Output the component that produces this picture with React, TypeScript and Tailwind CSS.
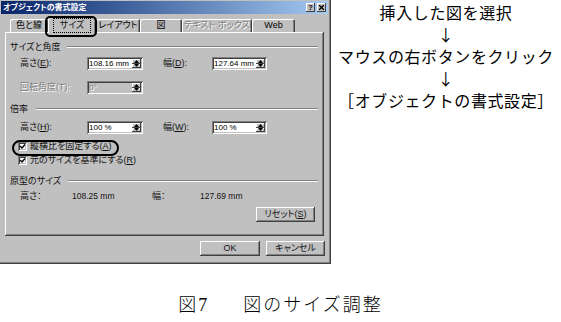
import React from "react";

const raised =
  "shadow-[inset_-1px_-1px_0_#404040,inset_1px_1px_0_#ffffff,inset_-2px_-2px_0_#808080]";
const raisedSm = "shadow-[inset_-1px_-1px_0_#404040,inset_1px_1px_0_#ffffff]";
const sunken =
  "shadow-[inset_1px_1px_0_#808080,inset_-1px_-1px_0_#ffffff,inset_2px_2px_0_#404040,inset_-2px_-2px_0_#c0c0c0]";

function U({ children }: { children: React.ReactNode }) {
  return <span className="underline underline-offset-[1px]">{children}</span>;
}

function Spin() {
  return (
    <div className="flex flex-col w-[9px] h-full shrink-0">
      <div className={`flex-1 bg-[#c0c0c0] ${raisedSm} flex items-center justify-center`}>
        <svg width="5" height="3" viewBox="0 0 5 3">
          <path d="M2.5 0 L5 3 L0 3 Z" fill="#000" />
        </svg>
      </div>
      <div className={`flex-1 bg-[#c0c0c0] ${raisedSm} flex items-center justify-center`}>
        <svg width="5" height="3" viewBox="0 0 5 3">
          <path d="M0 0 L5 0 L2.5 3 Z" fill="#000" />
        </svg>
      </div>
    </div>
  );
}

function Field({
  value,
  width,
  disabled,
}: {
  value: string;
  width: string;
  disabled?: boolean;
}) {
  return (
    <div
      className={`flex h-[13px] ${width} ${sunken} ${
        disabled ? "bg-[#c0c0c0]" : "bg-white"
      } p-[2px] shrink-0`}
    >
      <div
        className={`flex-1 min-w-0 flex items-center text-[8px] leading-none whitespace-nowrap ${
          disabled ? "text-[#808080] [text-shadow:1px_1px_0_#ffffff]" : "text-black"
        }`}
      >
        {value}
      </div>
      <Spin />
    </div>
  );
}

function Header({ label, lineLeft }: { label: string; lineLeft: string }) {
  return (
    <div className="flex items-center h-[10px] pl-[5px] pr-[6px]">
      <span className="leading-none whitespace-nowrap">{label}</span>
      <div className={`flex-1 ${lineLeft} h-[2px] border-t border-t-[#808080] border-b border-b-white`} />
    </div>
  );
}

function Check() {
  return (
    <div className={`w-[9px] h-[9px] shrink-0 bg-white ${sunken} flex items-center justify-center`}>
      <svg width="7" height="7" viewBox="0 0 7 7">
        <path d="M1 3 L3 5 L6 1.5" stroke="#000" strokeWidth="1.4" fill="none" />
      </svg>
    </div>
  );
}

function Tab({ w, children, dim }: { w: string; children: React.ReactNode; dim?: boolean }) {
  return (
    <div
      className={`${w} h-[13px] bg-[#c0c0c0] rounded-t-[2px] shadow-[inset_1px_1px_0_#ffffff,inset_-1px_0_0_#404040,inset_-2px_0_0_#808080] flex items-center justify-center leading-none whitespace-nowrap mb-px ${
        dim ? "text-[#808080] [text-shadow:1px_1px_0_#ffffff]" : "text-black"
      }`}
    >
      {children}
    </div>
  );
}

function Btn({ w, children }: { w: string; children: React.ReactNode }) {
  return (
    <div
      className={`${w} h-[15px] bg-[#c0c0c0] ${raised} flex items-center justify-center leading-none whitespace-nowrap`}
    >
      {children}
    </div>
  );
}

export default function App() {
  return (
    <div className="w-[561px] h-[322px] bg-white relative overflow-hidden font-['Liberation_Sans','Noto_Sans_CJK_JP',sans-serif]">
      <div className="flex">
        {/* Dialog */}
        <div className="bg-[#404040] pr-px pb-px">
          <div className="bg-[#808080] pr-px pb-px">
            <div className="relative w-[329px] h-[262px] bg-[#c0c0c0] flex flex-col text-[9px] text-[#111] [font-feature-settings:'palt']">
              {/* title bar */}
              <div className="mt-px h-[13px] mx-px bg-gradient-to-r from-[#0a246a] to-[#a6caf0] flex items-center pl-[2px] pr-[2px]">
                <span className="text-white font-bold text-[8px] leading-none whitespace-nowrap">
                  オブジェクトの書式設定
                </span>
                <div className="flex-1" />
                <div
                  className={`w-[9px] h-[9px] bg-[#c0c0c0] ${raisedSm} flex items-center justify-center text-[8px] font-bold leading-none text-black`}
                >
                  ?
                </div>
                <div className={`ml-[2px] w-[9px] h-[9px] bg-[#c0c0c0] ${raisedSm} flex items-center justify-center`}>
                  <svg width="5" height="5" viewBox="0 0 5 5">
                    <path d="M0 0 L5 5 M5 0 L0 5" stroke="#000" strokeWidth="1.3" />
                  </svg>
                </div>
              </div>

              {/* tabs */}
              <div className="relative z-10 flex items-end h-[16px] pl-[10px] mt-[3px] -mb-px">
                <Tab w="w-[38px]">色と線</Tab>
                <div className="relative w-[48px] h-[16px] bg-[#c0c0c0] rounded-t-[2px] shadow-[inset_1px_1px_0_#ffffff,inset_-1px_0_0_#404040,inset_-2px_0_0_#808080] flex items-center justify-center leading-none whitespace-nowrap">
                  <span className="px-[6px] py-[2px] outline outline-1 outline-dotted outline-black">
                    サイズ
                  </span>
                </div>
                <Tab w="w-[44px]">レイアウト</Tab>
                <Tab w="w-[42px]">図</Tab>
                <Tab w="w-[70px]" dim>
                  テキスト ボックス
                </Tab>
                <Tab w="w-[43px]">Web</Tab>
              </div>

              {/* panel */}
              <div className={`ml-[5px] w-[319px] h-[204px] ${raised} flex flex-col pt-[10px]`}>
                <Header label="サイズと角度" lineLeft="ml-[7px]" />

                <div className="flex items-center h-[13px] mt-[5px] pl-[15px]">
                  <span className="w-[67px] leading-none whitespace-nowrap">
                    高さ(<U>E</U>):
                  </span>
                  <Field value="108.16 mm" width="w-[56px]" />
                  <span className="ml-[20px] w-[49px] leading-none whitespace-nowrap">
                    幅(<U>D</U>):
                  </span>
                  <Field value="127.64 mm" width="w-[55px]" />
                </div>

                <div className="flex items-center h-[13px] mt-[11px] pl-[15px]">
                  <span className="w-[67px] leading-none whitespace-nowrap text-[#808080] [text-shadow:1px_1px_0_#ffffff]">
                    回転角度(T):
                  </span>
                  <Field value="0°" width="w-[56px]" disabled />
                </div>

                <div className="mt-[10px]">
                  <Header label="倍率" lineLeft="ml-[8px]" />
                </div>

                <div className="flex items-center h-[13px] mt-[7px] pl-[15px]">
                  <span className="w-[67px] leading-none whitespace-nowrap">
                    高さ(<U>H</U>):
                  </span>
                  <Field value="100 %" width="w-[56px]" />
                  <span className="ml-[20px] w-[49px] leading-none whitespace-nowrap">
                    幅(<U>W</U>):
                  </span>
                  <Field value="100 %" width="w-[55px]" />
                </div>

                <div className="flex items-center h-[10px] mt-[7px] pl-[13px]">
                  <Check />
                  <span className="ml-[3px] leading-none whitespace-nowrap">
                    縦横比を固定する(<U>A</U>)
                  </span>
                </div>
                <div className="flex items-center h-[10px] mt-[4px] pl-[13px]">
                  <Check />
                  <span className="ml-[3px] leading-none whitespace-nowrap">
                    元のサイズを基準にする(<U>R</U>)
                  </span>
                </div>

                <div className="mt-[11px]">
                  <Header label="原型のサイズ" lineLeft="ml-[7px]" />
                </div>

                <div className="flex items-center h-[10px] mt-[5px] pl-[15px] whitespace-nowrap">
                  <span className="w-[52px] leading-none">高さ：</span>
                  <span className="w-[80px] leading-none text-[8.5px]">108.25 mm</span>
                  <span className="w-[48px] leading-none">幅：</span>
                  <span className="leading-none text-[8.5px]">127.69 mm</span>
                </div>

                <div className="flex justify-end pr-[9px] mt-[6px]">
                  <Btn w="w-[59px]">
                    リセット(<U>S</U>)
                  </Btn>
                </div>
              </div>

              {/* buttons */}
              <div className="flex justify-end gap-[6px] pr-[4px] mt-[5px]">
                <Btn w="w-[60px]">OK</Btn>
                <Btn w="w-[59px]">キャンセル</Btn>
              </div>

              {/* annotations */}
              <div className="absolute left-[45px] top-[16px] w-[52px] h-[21px] border-2 border-black rounded-[5px] z-20" />
              <div className="absolute left-[12px] top-[140px] w-[107px] h-[16px] border-2 border-black rounded-[8px] z-20" />
            </div>
          </div>
        </div>

        {/* right text */}
        <div className="flex-1 flex flex-col items-center pt-[1px] text-[16px] leading-[22px] text-black font-['Noto_Sans_CJK_JP',sans-serif] tracking-[0.6px]">
          <div>挿入した図を選択</div>
          <div>↓</div>
          <div>マウスの右ボタンをクリック</div>
          <div>↓</div>
          <div>［オブジェクトの書式設定］</div>
        </div>
      </div>

      {/* caption */}
      <div className="flex justify-center mt-[30px] text-[18px] leading-[22px] text-black tracking-[2px] font-['Liberation_Serif','Noto_Sans_CJK_JP',serif] font-light">
        <span>図7</span>
        <span className="ml-[34px]">図のサイズ調整</span>
      </div>
    </div>
  );
}
